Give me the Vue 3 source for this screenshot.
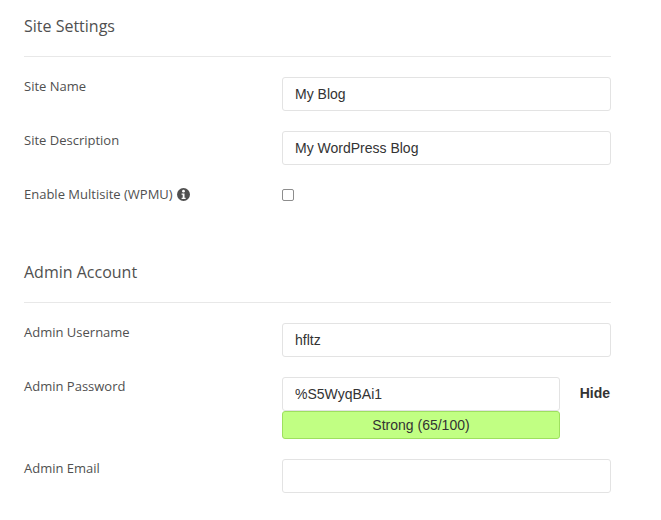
<script setup>
const site = [
  { label: 'Site Name', value: 'My Blog' },
  { label: 'Site Description', value: 'My WordPress Blog' },
]
</script>

<template>
  <main class="page">
    <section class="sec">
      <h2 class="title">Site Settings</h2>
      <div class="rows">
        <div v-for="r in site" :key="r.label" class="row">
          <label class="lbl">{{ r.label }}</label>
          <input class="inp" :value="r.value" />
        </div>
        <div class="row">
          <label class="lbl">Enable Multisite (WPMU)
            <svg class="info" viewBox="0 0 24 24" width="13" height="13" aria-hidden="true">
              <circle cx="12" cy="12" r="12" fill="#505050" />
              <circle cx="12" cy="5.8" r="2.5" fill="#fff" />
              <path d="M8.5 10h5.4v8h2v2.4H8.5V18h2v-5.600h-2z" fill="#fff" />
            </svg>
          </label>
          <span class="box"></span>
        </div>
      </div>
    </section>
    <section class="sec second">
      <h2 class="title">Admin Account</h2>
      <div class="rows">
        <div class="row">
          <label class="lbl">Admin Username</label>
          <input class="inp" value="hfltz" />
        </div>
        <div class="row">
          <label class="lbl">Admin Password</label>
          <div class="pw">
            <div class="pw-top">
              <input class="inp pw-inp" value="%S5WyqBAi1" />
              <a class="hide">Hide</a>
            </div>
            <div class="meter">Strong (65/100)</div>
          </div>
        </div>
        <div class="row">
          <label class="lbl">Admin Email</label>
          <input class="inp" value="" />
        </div>
      </div>
    </section>
  </main>
</template>

<style scoped>
.page {
  width: 587px;
  padding: 16px 0 0 24px;
  font-family: "Open Sans", sans-serif;
  color: #555;
}
.title {
  margin: 0;
  height: 40px;
  border-bottom: 1px solid #e8e8e8;
  font-size: 16px;
  font-weight: 400;
  line-height: 20px;
  color: #505050;
}
.rows {
  display: flex;
  flex-direction: column;
  gap: 20px;
  padding-top: 20px;
}
.row {
  display: grid;
  grid-template-columns: 258px 329px;
  align-items: start;
}
.lbl {
  font-size: 13px;
  line-height: 18px;
  color: #505050;
  display: flex;
  align-items: center;
  gap: 4px;
}
.inp {
  box-sizing: border-box;
  width: 100%;
  height: 34px;
  padding: 0 12px;
  border: 1px solid #e3e3e3;
  border-radius: 3px;
  background: #fff;
  font-family: "Liberation Sans", Arial, sans-serif;
  font-size: 14px;
  color: #333;
  outline: none;
  display: block;
}
.box {
  box-sizing: border-box;
  width: 12px;
  height: 12px;
  margin-top: 4px;
  border: 1px solid #8d8d8d;
  border-radius: 2px;
  background: #fff;
}
.second {
  margin-top: 59px;
}
.pw-top {
  display: flex;
  justify-content: space-between;
  align-items: center;
}
.pw-inp {
  width: 278px;
}
.hide {
  margin: -2px 1px 0 0;
  font-family: "Liberation Sans", Arial, sans-serif;
  font-size: 14px;
  font-weight: 700;
  color: #333;
}
.meter {
  box-sizing: border-box;
  width: 278px;
  height: 28px;
  border: 1px solid #9ee05f;
  border-radius: 3px;
  background: #c1ff83;
  font-family: "Liberation Sans", Arial, sans-serif;
  font-size: 14px;
  line-height: 26px;
  text-align: center;
  color: #333;
}
</style>
